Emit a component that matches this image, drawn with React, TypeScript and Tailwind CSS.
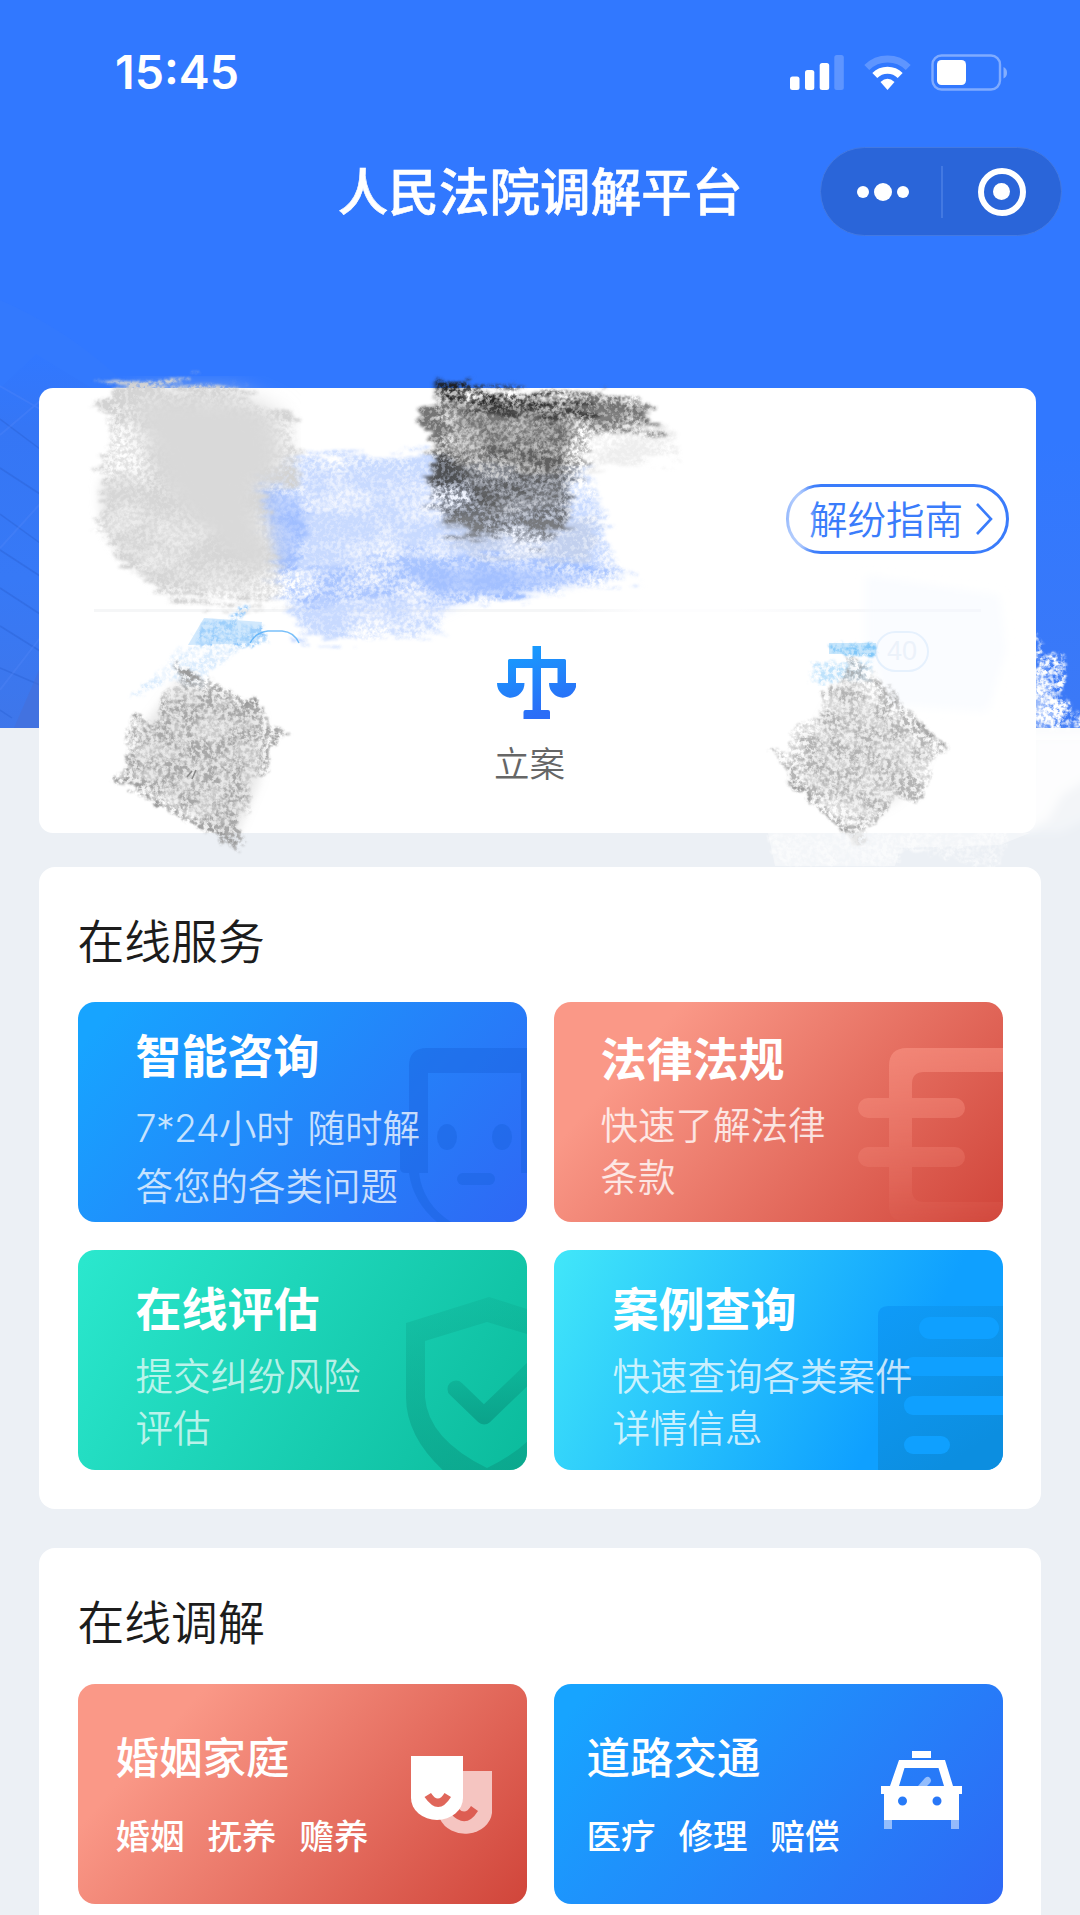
import React from "react";

const cjk = "font-['Noto_Sans_CJK_SC','Noto_Sans',sans-serif]";

function StatusIcons() {
  return (
    <svg className="block h-[40px] w-[222px]" viewBox="788 51 222 40" fill="none">
      <g fill="#fff">
        <rect x="790" y="75.5" width="9.5" height="13.5" rx="2.5" />
        <rect x="805" y="69" width="9.3" height="20" rx="2.5" />
        <rect x="819.7" y="62" width="9.5" height="27" rx="2.5" />
        <rect x="834.3" y="54" width="9.5" height="35" rx="2.5" opacity=".22" />
        <path d="M887.5 89l-7-8q7-6.500 14 0z" />
      </g>
      <path d="M874.800 74.500a18 18 0 0 1 25.400 0" stroke="#fff" strokeWidth="7" />
      <path d="M866.800 66.500a29.500 29.500 0 0 1 41.400 0" stroke="#fff" strokeOpacity=".22" strokeWidth="7" />
      <rect x="932.500" y="54.500" width="67.500" height="34" rx="9" stroke="#fff" strokeOpacity=".38" strokeWidth="2.400" />
      <rect x="937" y="59" width="29" height="25" rx="4.500" fill="#fff" />
      <path d="M1003.500 66q3.500 1.500 3.500 5.700t-3.500 5.700z" fill="#fff" fillOpacity=".4" />
    </svg>
  );
}

function Capsule() {
  return (
    <div className="flex h-[89px] w-[242px] items-center rounded-full border border-[#4379e2] bg-[#2a65d9]">
      <div className="flex w-[120px] items-center justify-center gap-[5px] pl-[5px]">
        <span className="size-[12px] rounded-full bg-white" />
        <span className="size-[18px] rounded-full bg-white" />
        <span className="size-[12px] rounded-full bg-white" />
      </div>
      <div className="h-[52px] w-[2px] bg-[#4379e2]" />
      <div className="flex flex-1 justify-center">
        <div className="flex size-[48px] items-center justify-center rounded-full border-[6px] border-white">
          <span className="size-[17px] rounded-full bg-white" />
        </div>
      </div>
    </div>
  );
}

function Scales() {
  return (
    <svg className="block h-[74px] w-[80px]" viewBox="496 646 80 74">
      <defs>
        <linearGradient id="scales" x1="0" y1="0" x2=".35" y2="1">
          <stop offset="0" stopColor="#15a2ff" />
          <stop offset="1" stopColor="#2b6df7" />
        </linearGradient>
      </defs>
      <path
        fill="url(#scales)"
        d="M532.500 646h8.500v13h23.500q1.500 0 1.500 1.500V683h10.500a13.700 14.600 0 0 1-27.500 0h8.500v-15H541v42h7q2 0 2 2v7h-26.500v-7q0-2 2-2h7v-42h-16.500v15h8.500a13.700 14.600 0 0 1-27.500 0H508v-22.500q0-1.500 1.500-1.500h23z"
      />
    </svg>
  );
}

/* Faint tower-block facade in the lower part of the banner. */
function Facade() {
  return (
    <svg className="absolute top-[290px] left-0 h-[438px] w-full" viewBox="0 290 1080 438">
      <defs>
        <linearGradient id="fade" x1="0" y1="0" x2="0" y2="1">
          <stop offset="0" stopColor="#3178ff" />
          <stop offset=".2" stopColor="#3576f5" />
          <stop offset=".6" stopColor="#3779f6" />
          <stop offset="1" stopColor="#3e76ea" />
        </linearGradient>
        <linearGradient id="fadeR" x1="0" y1="0" x2="0" y2="1">
          <stop offset="0" stopColor="#3178ff" />
          <stop offset="1" stopColor="#3c79f6" />
        </linearGradient>
      </defs>
      <rect x="1030" y="440" width="50" height="288" fill="url(#fadeR)" />
      <path d="M0 300Q70 330 130 388H0z" fill="#3579fc" fillOpacity=".7" />
      <path d="M0 388l36-34 56 34v340H0z" fill="url(#fade)" />
      <g stroke="#2c63d8" strokeWidth="1.500" strokeOpacity=".5">
        <path d="M0 419l40 30M0 468l40 26M0 514l40 29M0 550l40 26M0 588l40 26M0 626l40 25M0 668l40 17M0 710l12 8" />
      </g>
      <g stroke="#5a8dfb" strokeWidth="2" strokeOpacity=".25">
        <path d="M0 435l40-34M0 548l40-44M0 690l40-52M0 386l40 23" />
      </g>
      <path d="M14 728l25-58v58z" fill="#4670d8" fillOpacity=".6" />
    </svg>
  );
}

/* Chalk strokes rubbed over the profile card. */
function Scribbles() {
  return (
    <svg
      className="pointer-events-none absolute top-[360px] left-0 h-[520px] w-[1080px]"
      viewBox="0 360 1080 520"
    >
      <defs>
        <filter id="chalk" x="-10%" y="-10%" width="120%" height="120%" colorInterpolationFilters="sRGB">
          <feTurbulence type="fractalNoise" baseFrequency="0.025 0.2" numOctaves="4" seed="4" result="streak" />
          <feDisplacementMap in="SourceGraphic" in2="streak" scale="40" xChannelSelector="R" yChannelSelector="A" result="edge" />
          <feGaussianBlur in="edge" stdDeviation="1.500" result="soft" />
          <feTurbulence type="fractalNoise" baseFrequency="0.24" numOctaves="4" seed="9" />
          <feColorMatrix values="0 0 0 0 0  0 0 0 0 0  0 0 0 0 0  3 0 0 0 -1" result="fine" />
          <feTurbulence type="fractalNoise" baseFrequency="0.02 0.035" numOctaves="4" seed="12" />
          <feColorMatrix values="0 0 0 0 0  0 0 0 0 0  0 0 0 0 0  3 0 0 0 -1" result="coarse" />
          <feComposite in="fine" in2="coarse" operator="arithmetic" k2="0.65" k3="0.65" k4="0" result="grain" />
          <feComposite in="soft" in2="grain" operator="in" />
        </filter>
        <filter id="rough" x="-10%" y="-10%" width="120%" height="120%" colorInterpolationFilters="sRGB">
          <feTurbulence type="fractalNoise" baseFrequency="0.1" numOctaves="4" seed="7" result="n" />
          <feDisplacementMap in="SourceGraphic" in2="n" scale="16" xChannelSelector="R" yChannelSelector="G" result="edge" />
          <feGaussianBlur in="edge" stdDeviation="1" result="soft" />
          <feTurbulence type="fractalNoise" baseFrequency="0.24" numOctaves="4" seed="3" />
          <feColorMatrix values="0 0 0 0 0  0 0 0 0 0  0 0 0 0 0  3 0 0 0 -1.050" result="fine" />
          <feTurbulence type="fractalNoise" baseFrequency="0.05" numOctaves="3" seed="21" />
          <feColorMatrix values="0 0 0 0 0  0 0 0 0 0  0 0 0 0 0  2.500 0 0 0 -0.900" result="coarse" />
          <feComposite in="fine" in2="coarse" operator="arithmetic" k1="0.8" k2="0.5" k3="0.2" k4="0" result="grain" />
          <feComposite in="soft" in2="grain" operator="in" />
        </filter>
        <filter id="blur"><feGaussianBlur stdDeviation="12" /></filter>
        <filter id="haze" x="-20%" y="-20%" width="140%" height="140%"><feGaussianBlur stdDeviation="5" /></filter>
      </defs>

      <g filter="url(#chalk)">
        <path fill="#c8daff" d="M252 480L300 455 440 455 480 460 530 475 590 460 612 560 640 578 520 600 442 605 441 634 300 638 288 610 270 580 260 520z" />
        <path fill="#9fbeff" d="M254 483L300 485 310 530 290 580 400 555 560 560 630 574 520 600 380 598 300 605 278 580 262 530z" />
      </g>
      <path filter="url(#haze)" fill="#c6d8ff" fillOpacity=".25" d="M300 470L560 480 560 560 430 620 310 625z" />
      <path filter="url(#haze)" fill="#9fbeff" fillOpacity=".7" d="M262 492L300 494 306 530 285 575 275 560 265 520zM400 570L500 566 600 578 530 590 440 592z" />
      <g filter="url(#chalk)">
        <path fill="#d2d2d2" d="M108 384L210 383 243 390 262 402 292 414 288 432 295 450 300 480 255 486 268 520 275 560 284 600 240 605 175 600 150 585 112 556 97 515 102 470 110 440 104 410z" />
      </g>
      <path filter="url(#blur)" fill="#d9d9d9" d="M130 395L235 395 280 415 285 470 255 490 275 555 265 585 220 555 165 500 140 430z" />
      <path filter="url(#haze)" fill="#dadada" fillOpacity=".5" d="M100 480Q92 530 130 562T210 590L260 596 180 520 130 470z" />

      <g filter="url(#chalk)">
        <path fill="#5c5c5c" fillOpacity=".85" d="M437 380L520 390 612 394 650 402 645 416 665 428 590 436 585 466 565 490 572 520 545 545 450 530 438 505 425 500 436 450 418 430 420 405 440 400z" />
        <path fill="#111" fillOpacity=".8" d="M436 379L480 386 570 402 600 412 560 425 520 415 470 408 438 398z" />
        <path fill="#222" fillOpacity=".4" d="M430 450L560 440 570 475 540 490 440 510z" />
        <path fill="#aaa" fillOpacity=".2" d="M560 410L670 420 680 460 590 470zM430 520L600 520 590 560 480 560z" />
      </g>
      <path filter="url(#haze)" fill="#777" fillOpacity=".35" d="M450 405L575 405 560 505 490 520 452 460z" />

      <g filter="url(#rough)">
        <path fill="#7cbdfa" d="M205 620L262 624 268 642 240 646 192 646zM232 614l10-9 6 4-12 12z" />
        <path fill="#c3e0fb" d="M180 648L240 648 215 670 200 690 170 680 130 700z" fillOpacity=".6" />
      </g>
      <path fill="#b4dafc" fillOpacity=".6" d="M204 618L262 622 258 643 188 645z" />
      <path fill="none" stroke="#3fa4f6" strokeOpacity=".7" strokeWidth="1.500" d="M250 643q6-11 18-12h14q12 1 17 12" />

      <path filter="url(#haze)" fill="#f5faff" fillOpacity=".5" d="M865 575L1000 595 1006 650 988 712 890 705 865 640z" />
      <path fill="#a8d9fa" fillOpacity=".6" d="M829 643h47v11h-47z" />
      <g fill="#7fc6f8" filter="url(#rough)">
        <rect x="831" y="643" width="45" height="11" />
        <rect x="811" y="662" width="60" height="20" fillOpacity=".5" />
      </g>

      <path filter="url(#haze)" fill="#aaa" fillOpacity=".26" d="M178 680L262 715 260 780 235 840 130 775 140 730z" />
      <path filter="url(#haze)" fill="#aaa" fillOpacity=".16" d="M845 675L930 755 900 800 865 820 800 780 820 720z" />
      <g fill="#a8a8a8">
        <path filter="url(#rough)" d="M173 664L262 706 268 722 290 734 268 750 272 768 250 780 252 810 238 815 243 845 234 850 115 777 130 765 124 735 135 714 155 726 165 690 180 680z" />
        <path filter="url(#rough)" fillOpacity=".85" d="M848 654L868 668 948 750 930 762 930 785 915 806 896 795 885 815 865 825 868 845 855 843 787 782 785 765 767 748 788 752 795 725 820 715 825 690 845 680z" />
        <g fill="none" stroke="#9a9a9a" strokeWidth="6" filter="url(#rough)">
          <path d="M116 778L240 848M172 665L258 706" />
          <path d="M790 782L864 844M870 678L948 751" strokeWidth="3" />
        </g>
      </g>
      <path d="M187 777l5-6M192 779l4-9" stroke="#888" strokeWidth="1.500" />

      <path filter="url(#haze)" fill="#fff" fillOpacity=".6" d="M786 482L806 482 812 520 806 556 780 556z" />

      <g fill="#fff">
        <path filter="url(#rough)" d="M1036 630L1047 655 1064 654 1062 690 1072 708 1084 712 1084 728 1036 728z" />
        <path filter="url(#rough)" d="M1036 640L1050 660 1062 665 1060 700 1074 728H1036z" />
        <path filter="url(#haze)" d="M1030 665L1048 680 1052 726H1030z" fillOpacity=".5" />
        <path filter="url(#haze)" d="M1030 734H1095V815L1060 832H1020z" fillOpacity=".35" />
        <path d="M1034 728H1080V740H1034z" fillOpacity=".7" />
        <path filter="url(#haze)" d="M1030 734H1095V775L1062 795 1048 820 1024 832z" fillOpacity=".8" />
        <path filter="url(#rough)" d="M765 833L1010 832 1000 862 990 868 950 858 905 850 900 866 775 866z" fillOpacity=".6" />
        <path d="M768 833H1030L1000 845 900 848 895 866H775z" fillOpacity=".4" />
      </g>
    </svg>
  );
}

function ProfileCard() {
  return (
    <section className="h-[445px] w-[997px] rounded-[14px] bg-white px-[27px] pt-[96px]">
      <div className="flex justify-end">
        <div className="flex h-[70px] w-[223px] items-center rounded-full border-[3px] border-[#3a7cfb] pl-[20px] text-[#3a7cfb]">
          <span className="-mt-[4px] text-[38.500px] leading-[64px] font-[350]">解纷指南</span>
          <svg className="ml-[12px] h-[34px] w-[18px]" viewBox="0 0 18 34" fill="none" stroke="currentColor" strokeWidth="2.600">
            <path d="M2 2L16 17 2 32" />
          </svg>
        </div>
      </div>
      <div className="mx-[28px] mt-[55px] h-[3px] bg-[linear-gradient(90deg,#f5f6f7_55%,#fdfdfe_62%,#fdfdfe_72%,#f5f6f8_90%)]" />
      <div className="flex justify-end pt-[19px] pr-[80px]">
        <div className="flex h-[41px] w-[54px] items-center justify-center rounded-full border-2 border-[#d6e9fb] font-['Liberation_Sans',sans-serif] text-[27px] text-[#e2ebf5]">
          40
        </div>
      </div>
      <div className="-mt-[26px] ml-[430px] flex w-[80px] flex-col items-start">
        <Scales />
        <span className="mt-[16px] -ml-[2px] text-[35.500px] leading-[52px] font-[350] text-[#666]">立案</span>
      </div>
    </section>
  );
}

function RobotArt() {
  return (
    <g fill="#1761dc" fillOpacity=".42">
      <path d="M322 143q0-7 9-9V64q0-18 18-18H449V171h-6V71H350V171H328q-6 0-6-5z" />
      <path d="M331 171h10q4 31 32 49H359q-24-20-28-49z" />
      <ellipse cx="369" cy="135" rx="10" ry="13" />
      <ellipse cx="424" cy="135" rx="10" ry="13" />
      <rect x="379" y="171" width="38" height="12" rx="6" />
    </g>
  );
}

function BookArt() {
  return (
    <>
      <defs>
        <linearGradient id="book" x1="0" y1="46" x2="0" y2="220" gradientUnits="userSpaceOnUse">
          <stop offset="0" stopColor="#ff9d8d" stopOpacity=".5" />
          <stop offset="1" stopColor="#ff9d8d" stopOpacity=".03" />
        </linearGradient>
        <mask id="bookMask">
          <g fill="#fff">
            <path fillRule="evenodd" d="M353 46H500V219H350q-15 0-15-15V64q0-18 18-18zM370 70q-12 0-12 12v106q0 12 12 12H500V70z" />
            <rect x="304" y="96" width="107" height="20" rx="10" />
            <rect x="304" y="145" width="107" height="20" rx="10" />
          </g>
        </mask>
      </defs>
      <rect x="300" y="40" width="149" height="180" fill="url(#book)" mask="url(#bookMask)" />
    </>
  );
}

function ShieldArt() {
  return (
    <>
      <defs>
        <linearGradient id="tick" x1="0" y1="124" x2="0" y2="172" gradientUnits="userSpaceOnUse">
          <stop offset="0" stopColor="#0a9c85" stopOpacity=".35" />
          <stop offset="1" stopColor="#0a9c85" stopOpacity=".8" />
        </linearGradient>
        <linearGradient id="shield" x1="0" y1="47" x2="0" y2="220" gradientUnits="userSpaceOnUse">
          <stop offset="0" stopColor="#0b9b84" stopOpacity=".2" />
          <stop offset="1" stopColor="#0b9b84" stopOpacity=".6" />
        </linearGradient>
      </defs>
      <path
        fill="url(#shield)"
        fillRule="evenodd"
        d="M411 47l83 26v74q0 60-76 105h-10q-80-48-80-105V73zM409 72l-62 19v56q3 42 62 71 60-29 63-71V91z"
      />
      <path d="M378 139l28 27 52-50" fill="none" stroke="url(#tick)" strokeWidth="17" strokeLinecap="round" strokeLinejoin="round" />
    </>
  );
}

function DocumentArt() {
  return (
    <>
      <defs>
        <linearGradient id="doc" x1="0" y1="0" x2=".5" y2="1">
          <stop offset="0" stopColor="#0f9bf8" />
          <stop offset="1" stopColor="#0c8ee0" />
        </linearGradient>
      </defs>
      <path d="M334 56H449V220H324V66q0-10 10-10z" fill="url(#doc)" />
      <g fill="#0fa0ff">
        <rect x="365" y="67" width="80" height="22" rx="11" />
        <rect x="350" y="107" width="110" height="19" rx="9" />
        <rect x="350" y="146" width="110" height="19" rx="9" />
        <rect x="350" y="186" width="46" height="18" rx="9" />
      </g>
    </>
  );
}

function MasksArt() {
  return (
    <>
      <path d="M361 87h53v42a27 23 0 0 1-52 6z" fill="#f5c5c1" />
      <path d="M373 128l7-4q7 8 13-2l7 5q-12 19-27 3z" fill="#dd5d52" />
      <path d="M333 72h52v42a26 22 0 0 1-52 0z" fill="#fff" />
      <path d="M346.500 113l6.500-4q7 11 13.500 0l6.500 4q-12.500 20-26.500 0z" fill="#e0665a" />
    </>
  );
}

function TaxiArt() {
  return (
    <>
      <g fill="#fff">
        <path d="M358 67h19v7h-19z" />
        <path fillRule="evenodd" d="M345 76h46l8 26h9v8h-3v26h-75v-26h-3v-8h9zM350.500 84l-5.500 18h45l-5.500-18zM348.500 112.500a4.500 4.500 0 1 0 0 9 4.500 4.500 0 0 0 0-9zM383 112.500a4.500 4.500 0 1 0 0 9 4.500 4.500 0 0 0 0-9z" />
        <path d="M330 136h8v9h-8zM397 136h8v9h-8z" fillOpacity=".5" />
      </g>
      <path d="M364 102l7-8q3-2.500 5 0t0 5l-3 3z" fill="#fff" fillOpacity=".5" />
    </>
  );
}

function Tile({ bg, art, children }: { bg: string; art: React.ReactNode; children: React.ReactNode }) {
  return (
    <div className={"relative h-[220px] overflow-hidden rounded-[17px] text-white " + bg}>
      <svg className="absolute inset-0 h-[220px] w-[449px]" viewBox="0 0 449 220">
        {art}
      </svg>
      <div className="relative">{children}</div>
    </div>
  );
}

const blue = "bg-[linear-gradient(130deg,#17a4ff_6%,#2e69f5_98%)]";
const red = "bg-[linear-gradient(132deg,#fa9887_20%,#d1463b_99%)]";

export default function App() {
  return (
    <div className={"relative h-[1915px] w-[1080px] overflow-hidden bg-[#ecf0f5] " + cjk}>
      <header className="relative h-[728px] bg-[#3178ff] text-white">
        <Facade />
        <div className="relative flex items-center justify-between pt-[43px] pr-[70px] pl-[115px]">
          <span className="font-['Inter',sans-serif] text-[46.500px] leading-[58px] font-semibold">15:45</span>
          <StatusIcons />
        </div>
        <div className="relative mt-[46px] flex items-center justify-end pr-[18.500px]">
          <h1 className="-mt-[6px] mr-[77px] text-[50.600px] leading-[80px] font-medium [-webkit-text-stroke:0.6px_white]">
            人民法院调解平台
          </h1>
          <Capsule />
        </div>
      </header>

      <main className="relative -mt-[340px] flex flex-col px-[39px]">
        <ProfileCard />

        <section className="mt-[34px] h-[642px] w-[1002px] rounded-[16px] bg-white px-[38.500px] pt-[37px]">
          <h2 className="text-[46.800px] leading-[70px] font-[350] text-[#1c1c1c]">在线服务</h2>
          <div className="mt-[28px] grid grid-cols-2 gap-x-[27px] gap-y-[28px]">
            <Tile bg={blue} art={<RobotArt />}>
              <div className="pt-[21px] pl-[58px]">
                <h3 className="text-[46px] leading-[60px] font-bold">智能咨询</h3>
                <p className="mt-[17px] font-['Inter','Noto_Sans_CJK_SC',sans-serif] text-[37.500px] leading-[57.500px] font-[350] text-white/75 [word-spacing:3px]">
                  <span className="font-light tracking-[-0.600px]">7*24</span>小时 随时解<br />答您的各类问题
                </p>
              </div>
            </Tile>
            <Tile bg={red} art={<BookArt />}>
              <div className="pt-[24px] pl-[47px]">
                <h3 className="text-[46px] leading-[60px] font-bold">法律法规</h3>
                <p className="mt-[11px] text-[37.500px] leading-[52px] font-[350] text-white/80">
                  快速了解法律<br />条款
                </p>
              </div>
            </Tile>
            <Tile bg="bg-[linear-gradient(122deg,#2ae7cd_2%,#0bbb9c_100%)]" art={<ShieldArt />}>
              <div className="pt-[26px] pl-[58px]">
                <h3 className="text-[46px] leading-[60px] font-bold">在线评估</h3>
                <p className="mt-[12px] text-[37.500px] leading-[52px] font-[350] text-white/70">
                  提交纠纷风险<br />评估
                </p>
              </div>
            </Tile>
            <Tile bg="bg-[linear-gradient(117deg,#40e5f9_2%,#0fa0ff_74%)]" art={<DocumentArt />}>
              <div className="pt-[26px] pl-[59px]">
                <h3 className="text-[46px] leading-[60px] font-bold">案例查询</h3>
                <p className="mt-[12px] text-[37.500px] leading-[52px] font-[350] text-white/75">
                  快速查询各类案件<br />详情信息
                </p>
              </div>
            </Tile>
          </div>
        </section>

        <section className="mt-[39px] h-[400px] w-[1002px] rounded-t-[16px] bg-white px-[38.500px] pt-[37px]">
          <h2 className="text-[46.800px] leading-[70px] font-[350] text-[#1c1c1c]">在线调解</h2>
          <div className="mt-[28.500px] grid grid-cols-2 gap-x-[27px]">
            <Tile bg={red} art={<MasksArt />}>
              <div className="pt-[42px] pl-[38px]">
                <h3 className="text-[43.500px] leading-[60px] font-medium">婚姻家庭</h3>
                <div className="mt-[23px] flex gap-[23px] text-[34.500px] leading-[50px] font-medium">
                  <span>婚姻</span><span>抚养</span><span>赡养</span>
                </div>
              </div>
            </Tile>
            <Tile bg={blue} art={<TaxiArt />}>
              <div className="pt-[42px] pl-[33px]">
                <h3 className="text-[43.500px] leading-[60px] font-medium">道路交通</h3>
                <div className="mt-[23px] flex gap-[23px] text-[34.500px] leading-[50px] font-medium">
                  <span>医疗</span><span>修理</span><span>赔偿</span>
                </div>
              </div>
            </Tile>
          </div>
        </section>
      </main>

      <Scribbles />
    </div>
  );
}
